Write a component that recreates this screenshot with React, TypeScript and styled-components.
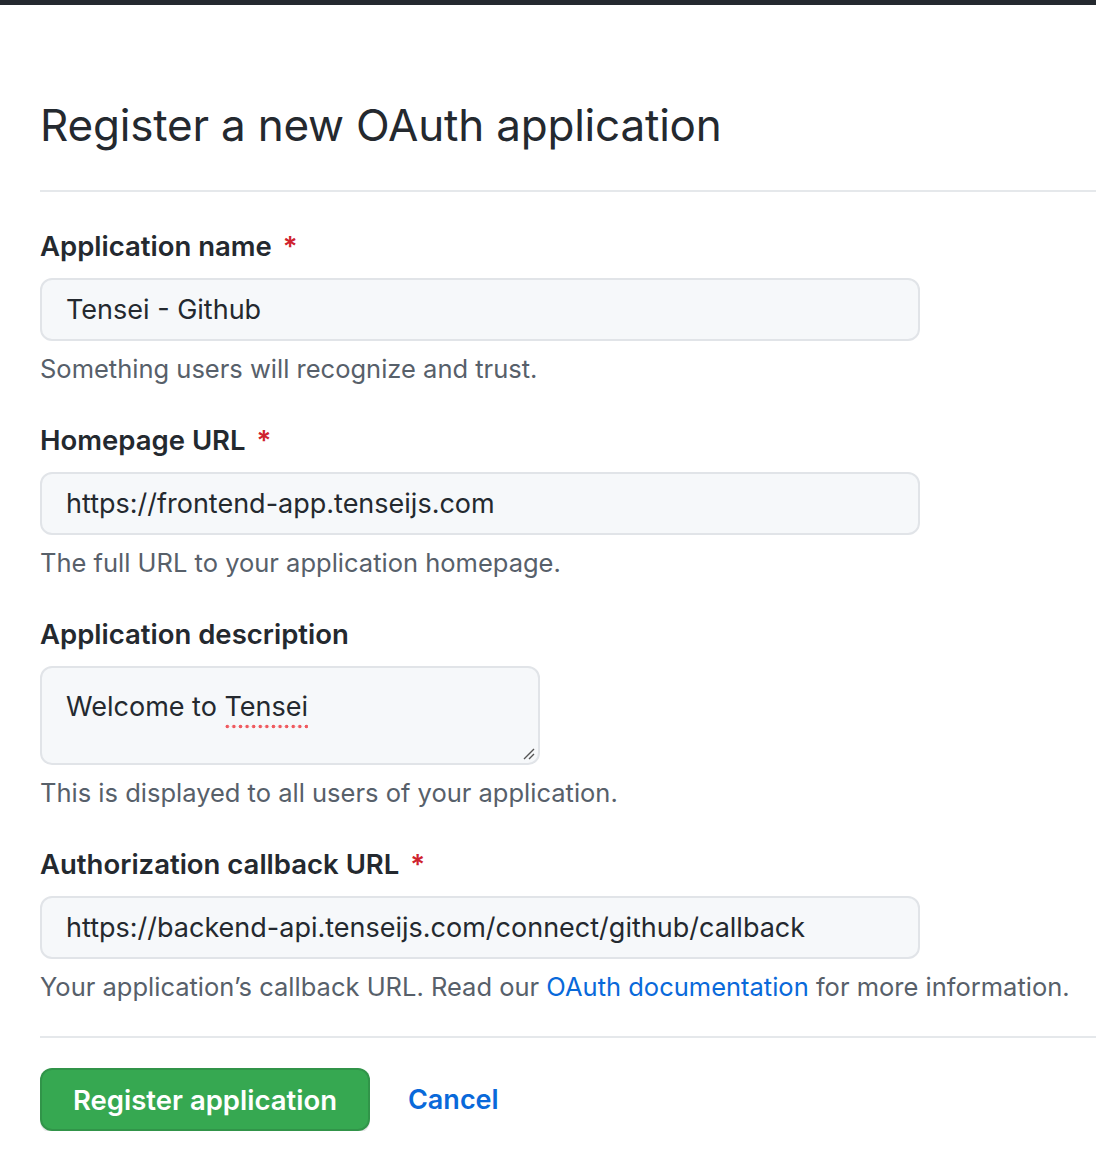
import React from "react";
import styled, { createGlobalStyle } from "styled-components";

const Global = createGlobalStyle`
  html, body { margin: 0; padding: 0; background: #ffffff; }
  body { font-family: Inter, "Noto Sans", "Liberation Sans", sans-serif; color: #24292f; }
  * { box-sizing: border-box; }
`;

const TopBar = styled.div`
  height: 5px;
  background: #24292f;
`;

const Page = styled.main`
  padding: 0 0 0 40px;
`;

const Subhead = styled.div`
  padding-top: 90px;
  padding-bottom: 35px;
  border-bottom: 2px solid #e5e8eb;
`;

const Heading = styled.h2`
  margin: 0;
  font-size: 44px;
  font-weight: 400;
  line-height: 60px;
  color: #24292f;
  letter-spacing: -0.2px;
`;

const Form = styled.form`
  display: flex;
  flex-direction: column;
`;

const Group = styled.div`
  display: flex;
  flex-direction: column;
  margin-top: 31px;
  &:first-child { margin-top: 32px; }
`;

const Label = styled.label`
  font-size: 27.5px;
  font-weight: 600;
  line-height: 44px;
  color: #24292f;
  margin-bottom: 10px;
  display: flex;
  gap: 11px;
`;

const Required = styled.span`
  color: #cf222e;
`;

const Input = styled.div`
  width: 880px;
  height: 63px;
  border: 2px solid #e1e4e8;
  border-radius: 12px;
  background: #f6f8fa;
  padding: 0 24px;
  display: flex;
  align-items: center;
  font-size: 27px;
  color: #24292f;
`;

const TextArea = styled.div`
  position: relative;
  width: 500px;
  height: 99px;
  border: 2px solid #e1e4e8;
  border-radius: 12px;
  background: #f6f8fa;
  padding: 20px 24px;
  font-size: 27px;
  line-height: 38px;
  color: #24292f;
`;

const Misspelled = styled.span`
  padding-bottom: 6px;
  background-image: radial-gradient(circle, #ef5a5f 1.6px, transparent 2.1px);
  background-size: 6.6px 5px;
  background-repeat: repeat-x;
  background-position: 0 100%;
`;

const Grip = styled.svg`
  position: absolute;
  right: 2px;
  bottom: 2px;
`;

const Note = styled.p`
  margin: 10px 0 0;
  font-size: 25.5px;
  line-height: 36px;
  color: #57606a;
`;

const Link = styled.a`
  color: #0969da;
  text-decoration: none;
`;

const Divider = styled.hr`
  border: 0;
  border-top: 2px solid #e5e8eb;
  margin: 31px 0 0;
`;

const Actions = styled.div`
  display: flex;
  align-items: center;
  gap: 38px;
  margin-top: 30px;
`;

const Primary = styled.button`
  height: 63px;
  padding: 0 31px;
  border: 2px solid rgba(27, 31, 36, 0.15);
  border-radius: 12px;
  background: #36a851;
  color: #ffffff;
  font-family: inherit;
  font-size: 27.5px;
  font-weight: 600;
  box-shadow: 0 2px 0 rgba(27, 31, 36, 0.1);
`;

const Cancel = styled.a`
  color: #0969da;
  font-size: 27px;
  font-weight: 600;
  text-decoration: none;
`;

const fields = [
  { label: "Application name", value: "Tensei - Github", note: "Something users will recognize and trust.", required: true },
  { label: "Homepage URL", value: "https://frontend-app.tenseijs.com", note: "The full URL to your application homepage.", required: true },
];

export default function App() {
  return (
    <>
      <Global />
      <TopBar />
      <Page>
        <Subhead>
          <Heading>Register a new OAuth application</Heading>
        </Subhead>
        <Form>
          {fields.map((f) => (
            <Group key={f.label}>
              <Label>
                {f.label}
                {f.required && <Required>*</Required>}
              </Label>
              <Input>{f.value}</Input>
              <Note>{f.note}</Note>
            </Group>
          ))}
          <Group>
            <Label>Application description</Label>
            <TextArea>
              Welcome to <Misspelled>Tensei</Misspelled>
              <Grip width="16" height="16" viewBox="0 0 16 16">
                <path d="M14 4 L4 14 M14 9 L9 14" stroke="#555" strokeWidth="1.4" fill="none" />
              </Grip>
            </TextArea>
            <Note>This is displayed to all users of your application.</Note>
          </Group>
          <Group>
            <Label>
              Authorization callback URL
              <Required>*</Required>
            </Label>
            <Input>https://backend-api.tenseijs.com/connect/github/callback</Input>
            <Note>
              Your application’s callback URL. Read our <Link href="#">OAuth documentation</Link> for more information.
            </Note>
          </Group>
          <Divider />
          <Actions>
            <Primary type="button">Register application</Primary>
            <Cancel href="#">Cancel</Cancel>
          </Actions>
        </Form>
      </Page>
    </>
  );
}
